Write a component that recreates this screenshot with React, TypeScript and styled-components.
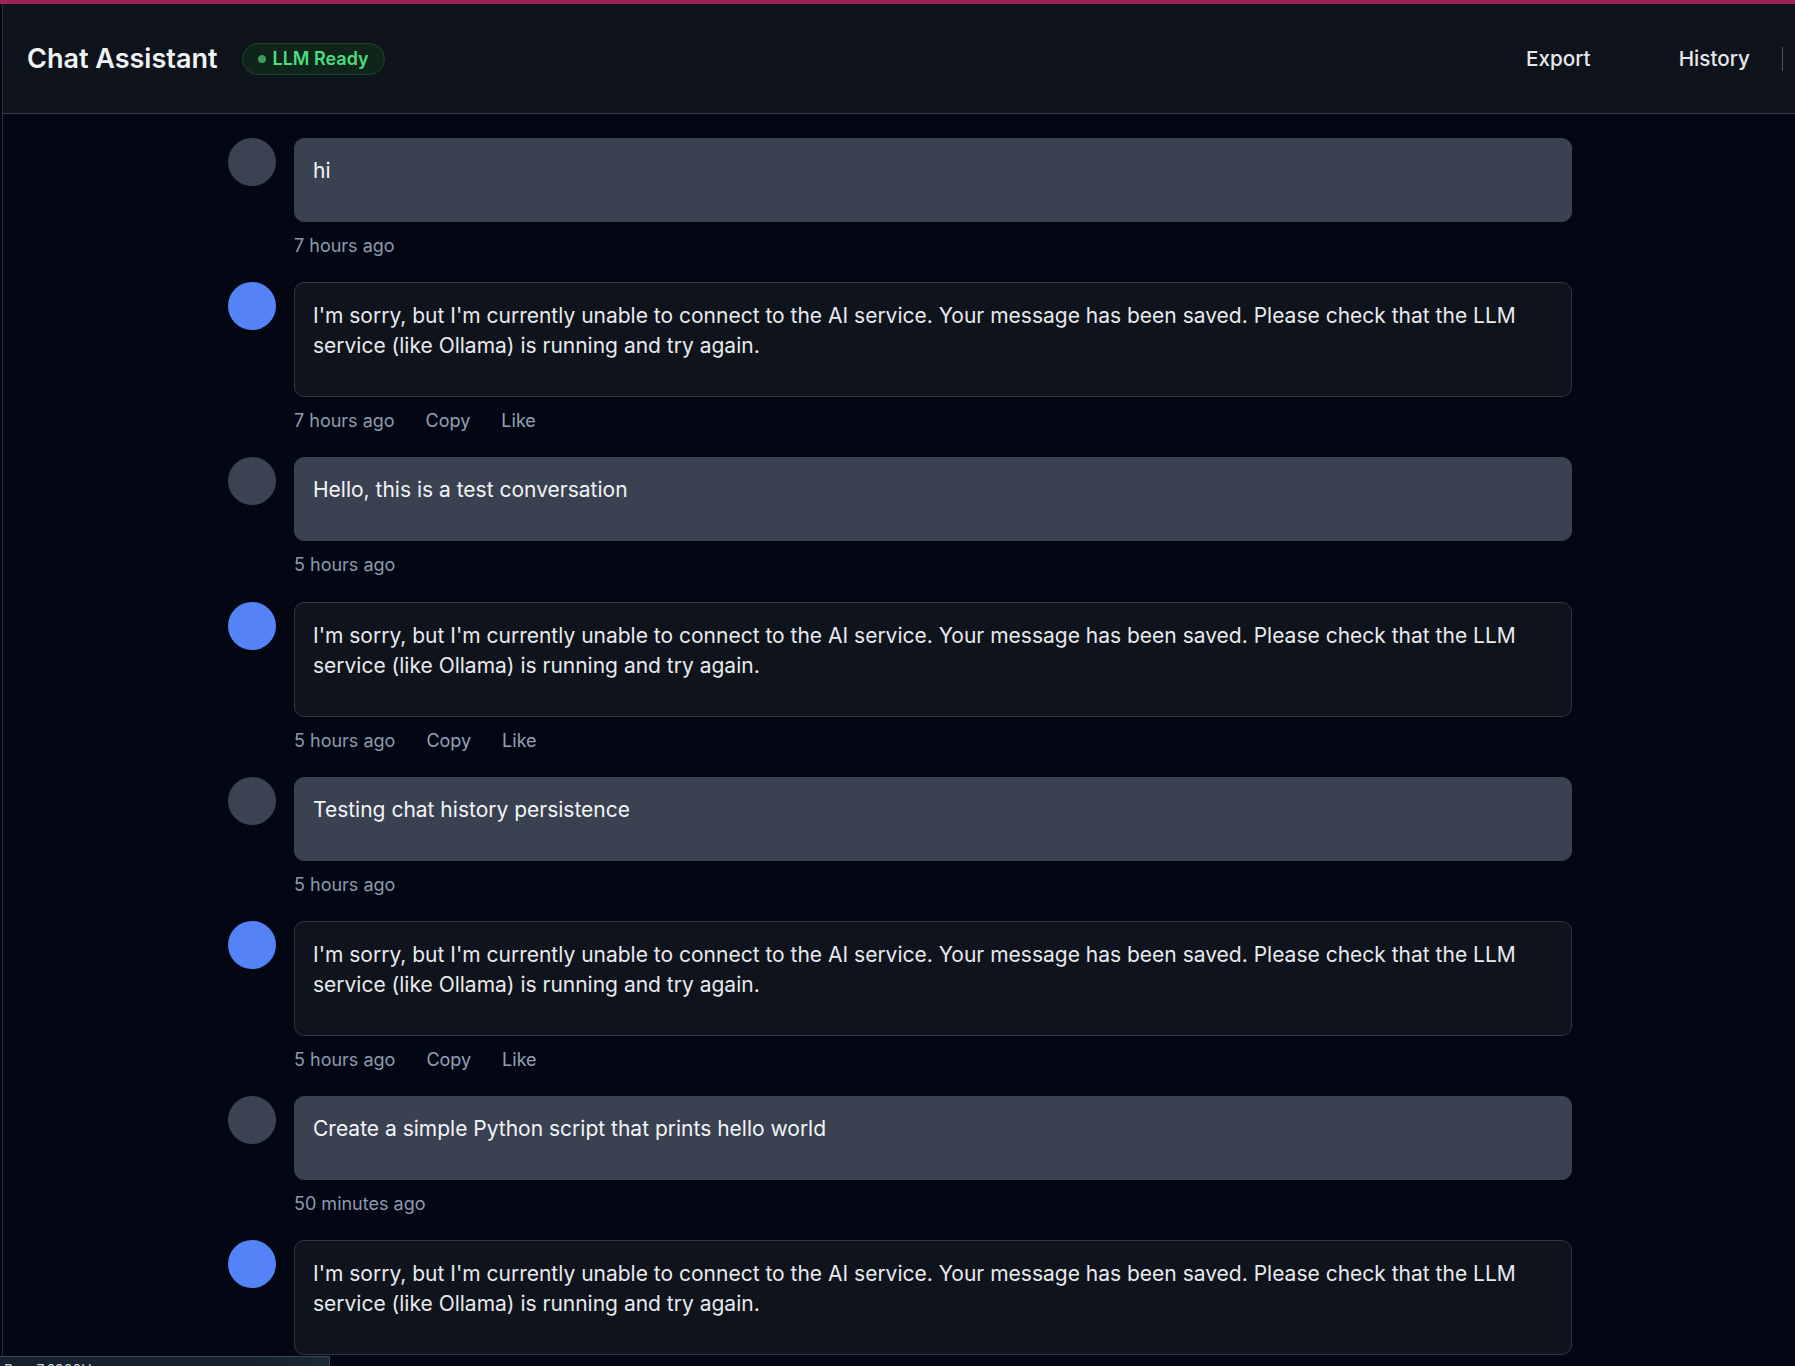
import React from "react";
import styled, { createGlobalStyle } from "styled-components";

const GlobalStyle = createGlobalStyle`
  html, body {
    margin: 0;
    padding: 0;
    background: #030713;
    overflow: hidden;
  }
  body {
    font-family: Inter, "Noto Sans", "Liberation Sans", sans-serif;
    -webkit-font-smoothing: antialiased;
  }
  * { box-sizing: border-box; }
`;

const Shell = styled.div`
  height: 100vh;
  display: flex;
  flex-direction: column;
  border-top: 4px solid #a3215b;
  background: #030713;
`;

const Frame = styled.div`
  flex: 1;
  min-height: 0;
  margin-left: 2px;
  border-left: 1px solid #2a303c;
  display: flex;
  flex-direction: column;
`;

const Header = styled.header`
  height: 110px;
  flex-shrink: 0;
  background: #0f131b;
  border-bottom: 1px solid #363d4b;
  display: flex;
  align-items: center;
  padding-left: 24px;
`;

const Title = styled.h1`
  margin: 0;
  font-size: 27px;
  font-weight: 600;
  color: #f1f3f6;
`;

const Badge = styled.span`
  margin-left: 24px;
  height: 32px;
  display: inline-flex;
  align-items: center;
  gap: 7px;
  padding: 0 15px;
  border-radius: 16px;
  background: #0f251a;
  border: 1px solid #1c442d;
  color: #4ade80;
  font-size: 18px;
  font-weight: 600;
`;

const Dot = styled.span`
  width: 8px;
  height: 8px;
  border-radius: 50%;
  background: #3a9c5b;
`;

const Spacer = styled.div`
  flex: 1;
`;

const HeaderButton = styled.button<{ $gapRight: number }>`
  background: none;
  border: none;
  padding: 0;
  margin-right: ${(p) => p.$gapRight}px;
  font-family: inherit;
  font-size: 20.7px;
  font-weight: 500;
  color: #e6e8ec;
  cursor: pointer;
`;

const Divider = styled.span`
  width: 1px;
  height: 24px;
  background: #4a5262;
  margin-right: 12px;
`;

const Main = styled.main`
  flex: 1;
  min-height: 0;
  overflow: hidden;
  padding: 24px 0 0 2px;
`;

const Feed = styled.div`
  width: 100%;
  max-width: 1344px;
  margin: 0 auto;
  display: flex;
  flex-direction: column;
`;

const Message = styled.div`
  margin-bottom: 24.2px;
`;

const Row = styled.div`
  display: flex;
  align-items: flex-start;
  gap: 18px;
`;

const Avatar = styled.div<{ $bot: boolean }>`
  width: 48px;
  height: 48px;
  flex-shrink: 0;
  border-radius: 50%;
  background: ${(p) => (p.$bot ? "#5383f6" : "#3b4252")};
`;

const Bubble = styled.div<{ $bot: boolean }>`
  flex: 1;
  border-radius: 10px;
  padding: ${(p) => (p.$bot ? "18px 18px 19px" : "17px 18px 19px")};
  background: ${(p) => (p.$bot ? "#0f131b" : "#3a4252")};
  border: 1px solid ${(p) => (p.$bot ? "#2e3543" : "#3a4252")};
  color: ${(p) => (p.$bot ? "#e8eaee" : "#f3f4f6")};
  font-size: 21px;
  line-height: 30px;
`;

const Text = styled.p`
  margin: 0 0 16px;
`;

const Meta = styled.div`
  margin: 12px 0 0 66px;
  display: flex;
  gap: 31px;
  font-size: 18px;
  line-height: 24px;
  color: #8e99ad;
`;

const MetaAction = styled.span`
  color: #93a0b5;
  cursor: pointer;
`;

const StatusTip = styled.div`
  position: fixed;
  left: 0;
  bottom: 0;
  width: 330px;
  height: 10px;
  overflow: hidden;
  background: linear-gradient(90deg, #17202b 0%, #17202b 72%, #1c2833 100%);
  border-top: 1px solid #394454;
  border-right: 1px solid #394454;
  padding: 5px 0 0 4px;
  font-size: 14px;
  line-height: 16px;
  color: #c9d1dc;
  white-space: pre;
`;

type Msg = { bot: boolean; text: string; time: string };

const ERR =
  "I'm sorry, but I'm currently unable to connect to the AI service. Your message has been saved. Please check that the LLM service (like Ollama) is running and try again.";

const messages: Msg[] = [
  { bot: false, text: "hi", time: "7 hours ago" },
  { bot: true, text: ERR, time: "7 hours ago" },
  { bot: false, text: "Hello, this is a test conversation", time: "5 hours ago" },
  { bot: true, text: ERR, time: "5 hours ago" },
  { bot: false, text: "Testing chat history persistence", time: "5 hours ago" },
  { bot: true, text: ERR, time: "5 hours ago" },
  { bot: false, text: "Create a simple Python script that prints hello world", time: "50 minutes ago" },
  { bot: true, text: ERR, time: "50 minutes ago" },
];

export default function App() {
  return (
    <>
      <GlobalStyle />
      <Shell>
        <Frame>
          <Header>
            <Title>Chat Assistant</Title>
            <Badge>
              <Dot />
              LLM Ready
            </Badge>
            <Spacer />
            <HeaderButton $gapRight={88}>Export</HeaderButton>
            <HeaderButton $gapRight={32}>History</HeaderButton>
            <Divider />
          </Header>
          <Main>
            <Feed>
              {messages.map((m, i) => (
                <Message key={i}>
                  <Row>
                    <Avatar $bot={m.bot} />
                    <Bubble $bot={m.bot}>
                      <Text>{m.text}</Text>
                    </Bubble>
                  </Row>
                  <Meta>
                    <span>{m.time}</span>
                    {m.bot && <MetaAction>Copy</MetaAction>}
                    {m.bot && <MetaAction>Like</MetaAction>}
                  </Meta>
                </Message>
              ))}
            </Feed>
          </Main>
        </Frame>
      </Shell>
      <StatusTip>{"P      7.6980H"}</StatusTip>
    </>
  );
}
